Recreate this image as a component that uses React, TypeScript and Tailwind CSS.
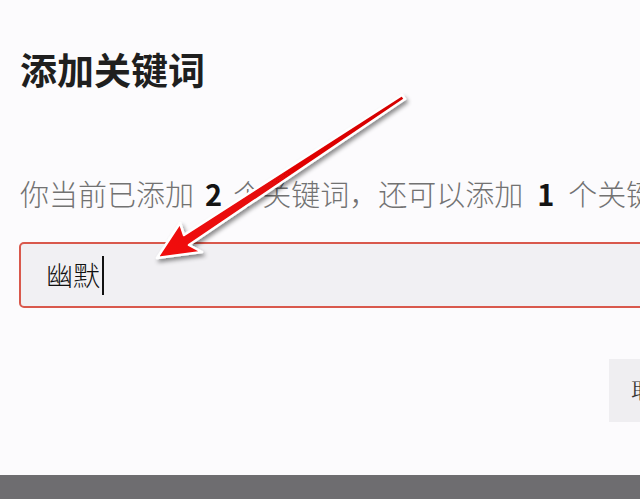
import React from "react";

export default function App() {
  return (
    <div className="relative w-[640px] h-[499px] overflow-hidden bg-[#fcfbfd] flex flex-col font-['Noto_Sans_CJK_SC','Noto_Sans',sans-serif]">
      <div className="flex-1 flex flex-col pl-[20px]">
        <h1 className="mt-[47px] text-[37px] leading-[44px] font-bold text-[#1f1f1f] whitespace-nowrap">
          添加关键词
        </h1>
        <p className="mt-[82px] text-[29px] leading-[40px] font-light text-[#727272] whitespace-nowrap">
          你当前已添加<span className="mx-[11px] font-bold text-[#141414]">2</span>个关键词，还可以添加<span className="mx-[14px] font-bold text-[#141414]">1</span>个关键词
        </p>
        <div className="mt-[29px] ml-[-1px] w-[660px] h-[66px] shrink-0 rounded-[5px] border-2 border-[#d9584c] bg-[#f1f0f3] flex items-center pl-[25px]">
          <span className="text-[27px] leading-[40px] font-light text-[#111111]">幽默</span>
          <span className="ml-[2px] w-[2px] h-[39px] bg-[#111111]" />
        </div>
        <div className="mt-[51px] flex justify-end">
          <div className="mr-[-40px] w-[71px] h-[63px] bg-[#efeef1] flex items-center pl-[22px] overflow-hidden">
            <span className="text-[22px] text-[#333333] font-['Liberation_Serif','Noto_Serif_CJK_SC',serif] whitespace-nowrap">取消</span>
          </div>
        </div>
      </div>
      <div className="h-[24px] shrink-0 bg-[#6e6d70]" />
      <svg
        className="absolute inset-0 pointer-events-none"
        width="640"
        height="499"
        viewBox="0 0 640 499"
      >
        <defs>
          <filter id="sh" x="-20%" y="-20%" width="140%" height="140%">
            <feDropShadow dx="2" dy="3" stdDeviation="2" floodColor="#000" floodOpacity="0.45" />
          </filter>
          <linearGradient id="rg" x1="0" y1="1" x2="1" y2="0">
            <stop offset="0" stopColor="#f20d0d" />
            <stop offset="1" stopColor="#d40000" />
          </linearGradient>
        </defs>
        <polygon
          points="157,258 180,223 184,235 402,95 405,99 189,245 202,252"
          fill="url(#rg)"
          stroke="#ffffff"
          strokeWidth="2.5"
          strokeLinejoin="round"
          filter="url(#sh)"
        />
      </svg>
    </div>
  );
}
